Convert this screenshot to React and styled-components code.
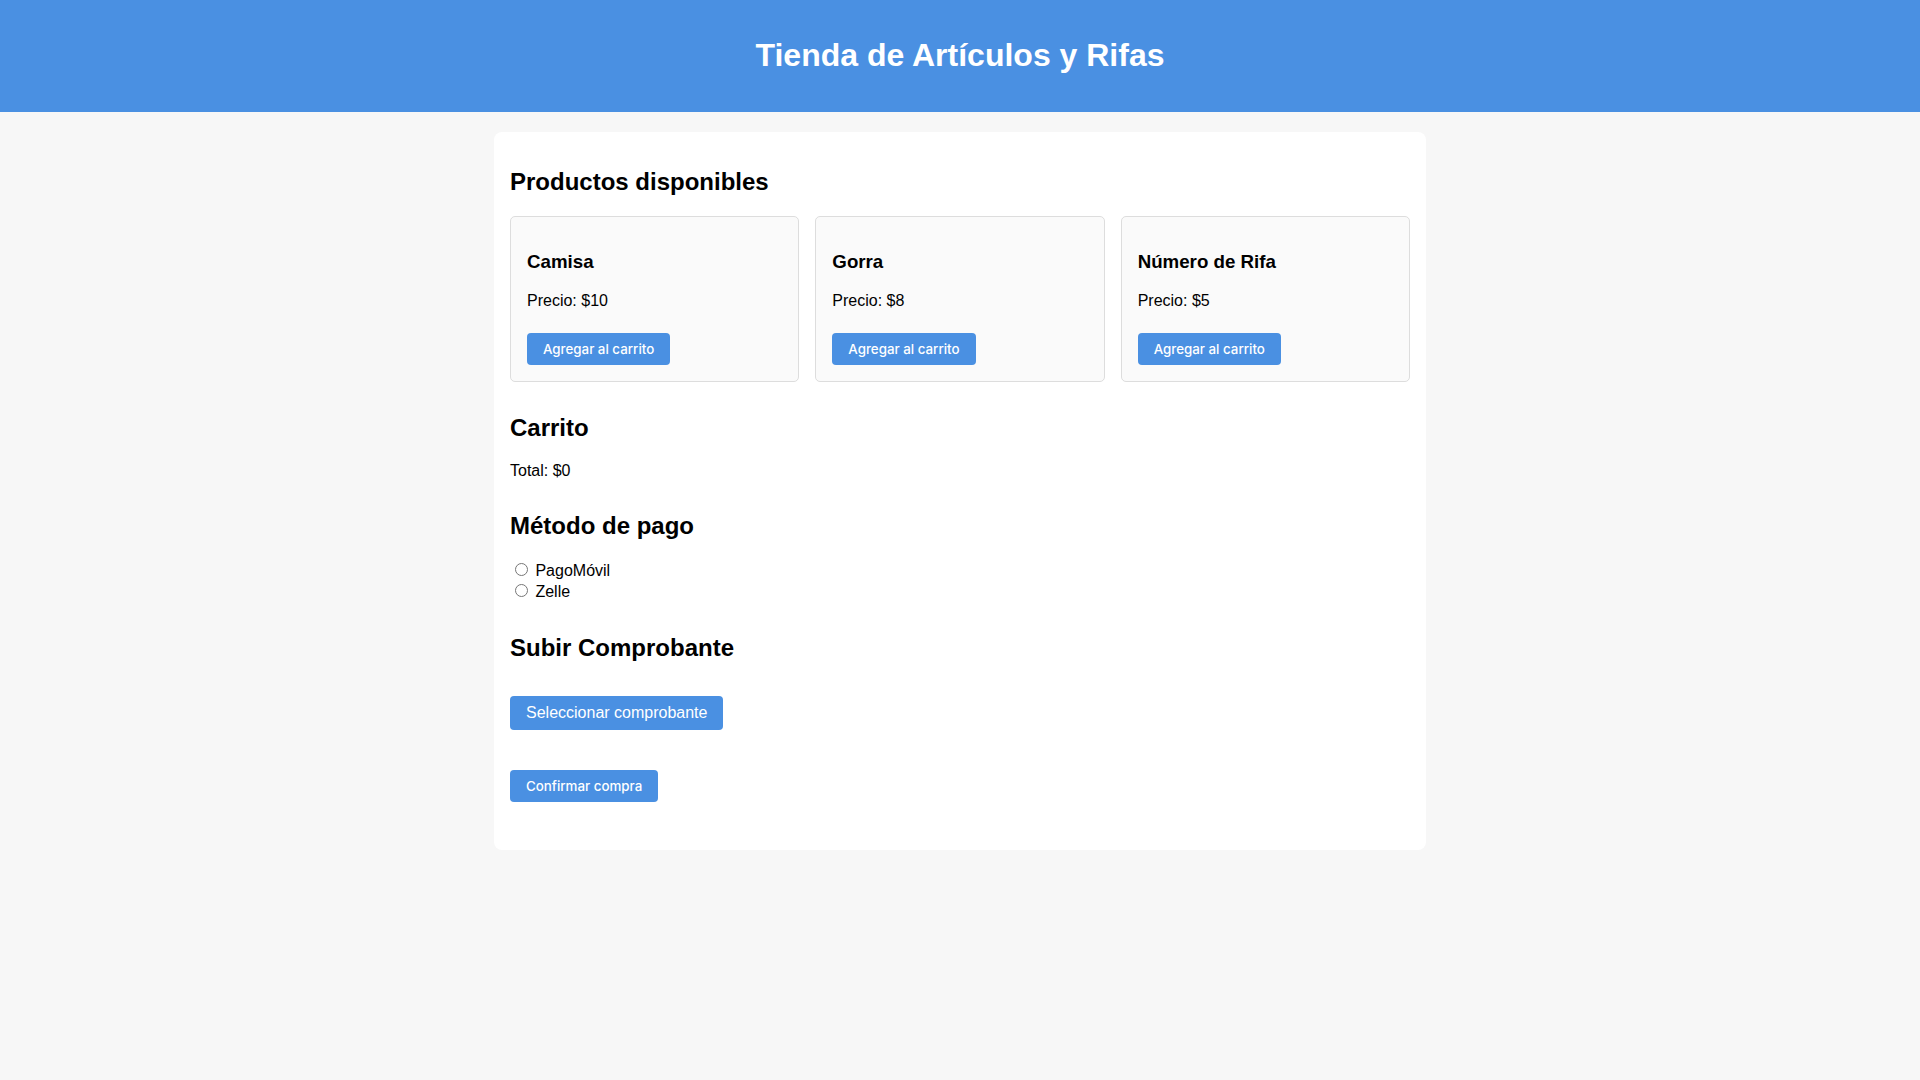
import { createGlobalStyle, styled } from "styled-components";

const GlobalStyle = createGlobalStyle`
  body {
    margin: 0;
    background-color: #f7f7f7;
    font-family: "Liberation Sans", Arial, sans-serif;
    color: #000;
  }
`;

const productos = [
  { nombre: "Camisa", precio: 10 },
  { nombre: "Gorra", precio: 8 },
  { nombre: "Número de Rifa", precio: 5 },
];

const App = () => {
  return (
    <>
      <GlobalStyle />
      <Header>
        <Title>Tienda de Artículos y Rifas</Title>
      </Header>

      <Main>
        <Section>
          <SectionTitle>Productos disponibles</SectionTitle>
          <ProductGrid>
            {productos.map((p) => (
              <ProductCard key={p.nombre}>
                <ProductName>{p.nombre}</ProductName>
                <Price>Precio: ${p.precio}</Price>
                <Button $offset={7}>Agregar al carrito</Button>
              </ProductCard>
            ))}
          </ProductGrid>
        </Section>

        <Section>
          <SectionTitle>Carrito</SectionTitle>
          <Price>Total: $0</Price>
        </Section>

        <Section>
          <SectionTitle>Método de pago</SectionTitle>
          <RadioLabel>
            <input type="radio" name="pago" value="pagomovil" /> PagoMóvil
          </RadioLabel>
          <RadioLabel>
            <input type="radio" name="pago" value="zelle" /> Zelle
          </RadioLabel>
        </Section>

        <Section>
          <SectionTitle>Subir Comprobante</SectionTitle>
          <UploadRow>
            <input type="file" id="comprobante" style={{ display: "none" }} />
            <UploadLabel htmlFor="comprobante">Seleccionar comprobante</UploadLabel>
          </UploadRow>
        </Section>

        <ConfirmRow>
          <Button>Confirmar compra</Button>
        </ConfirmRow>
      </Main>
    </>
  );
};

export default App;

const Header = styled.header`
  background-color: #4a90e2;
  color: white;
  text-align: center;
  padding: 16px;
`;

const Title = styled.h1`
  margin: 21.44px 0;
  font-size: 32px;
  font-weight: bold;
`;

const Main = styled.main`
  max-width: 900px;
  margin: 20px auto;
  padding: 16px;
  background-color: white;
  border-radius: 8px;
`;

const Section = styled.section`
  margin-bottom: 32px;
`;

const SectionTitle = styled.h2`
  font-size: 24px;
  margin: 19.92px 0;
`;

const ProductGrid = styled.div`
  display: grid;
  grid-template-columns: repeat(3, 1fr);
  gap: 16px;
`;

const ProductCard = styled.div`
  background-color: #fafafa;
  border: 1px solid #dddddd;
  border-radius: 5px;
  padding: 16px;
`;

const ProductName = styled.h3`
  font-size: 18.72px;
  margin: 18.72px 0;
`;

const Price = styled.p`
  font-size: 16px;
  margin: 16px 0;
`;

const Button = styled.button`
  margin-top: ${(props) => props.$offset || 0}px;
  background-color: #4a90e2;
  color: white;
  border: none;
  border-radius: 4px;
  padding: 8px 16px;
  font-family: Inter, "Noto Sans", sans-serif;
  font-size: 13.33px;
  font-weight: 500;
  cursor: pointer;
`;

const RadioLabel = styled.label`
  display: block;
  font-size: 16px;
  line-height: 20px;

  input {
    margin: 3px 3px 0 5px;
  }
`;

const UploadRow = styled.div`
  padding-top: 14px;
`;

const UploadLabel = styled.label`
  display: inline-block;
  background-color: #4a90e2;
  color: white;
  border-radius: 4px;
  padding: 8px 16px;
  font-size: 16px;
  cursor: pointer;
`;

const ConfirmRow = styled.div`
  margin-top: 40px;
  margin-bottom: 32px;
`;
